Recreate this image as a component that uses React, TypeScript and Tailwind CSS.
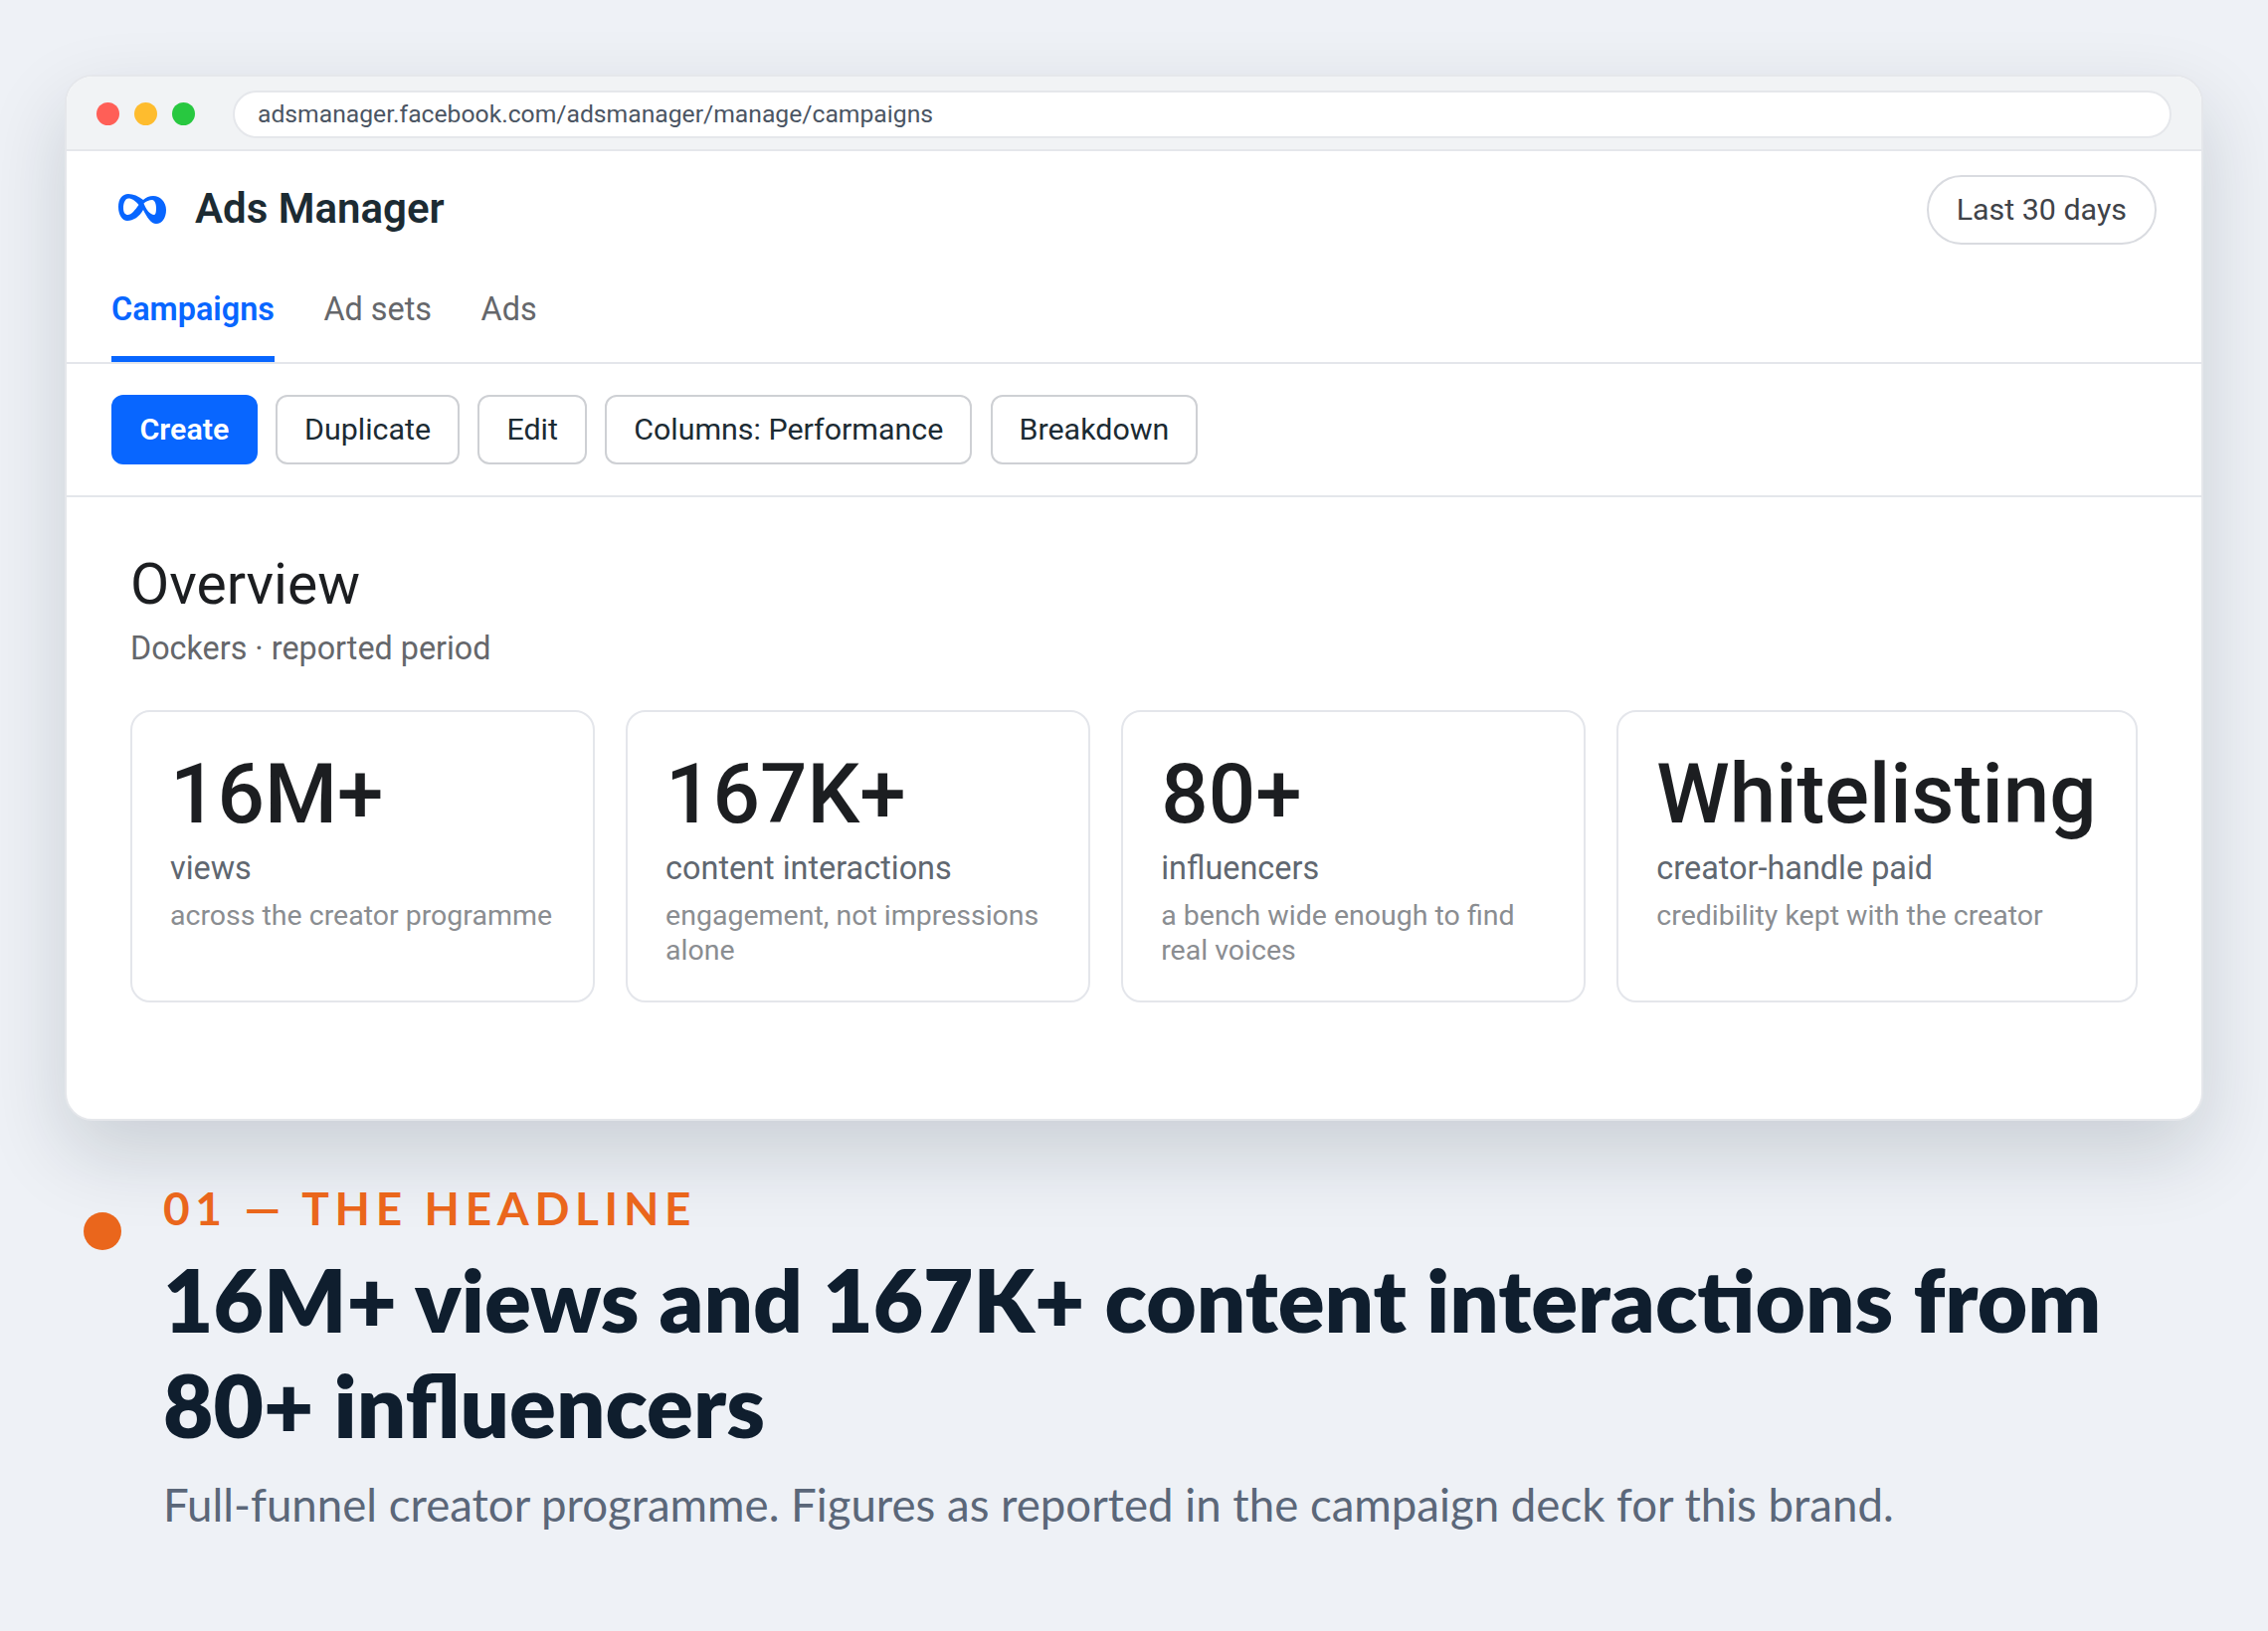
const stats = [
  { value: '16M+', label: 'views', note: 'across the creator programme' },
  { value: '167K+', label: 'content interactions', note: 'engagement, not impressions alone' },
  { value: '80+', label: 'influencers', note: 'a bench wide enough to find real voices' },
  { value: 'Whitelisting', label: 'creator-handle paid', note: 'credibility kept with the creator' },
];

const actions = ['Duplicate', 'Edit', 'Columns: Performance', 'Breakdown'];

function MetaLogo() {
  return (
    <svg width="48" height="30" viewBox="0 0 48 30">
      <path
        fill="#0866ff"
        fillRule="evenodd"
        d="M0 13C0 5 4 0 10 0C15 0 20 2 25 6C28 3.500 31 2 35 2C42 2 48 8 48 16C48 24 44 30 38 30C33 30 29 24 25 16C21 23 15 27 9 27C4 27 0 21 0 13ZM5 14C5 9 7 4.500 10 4.500C14 4.500 17 7 20.500 11C17 16 13 21 9.500 21C7 21 5 19 5 14ZM25.500 9.500C28 7.500 31 6 34 6C36.500 6 38 10 38 14C38 18 37.500 21 36 21C32 21 28 16 25.500 9.500Z"
      />
    </svg>
  );
}

export default function App() {
  return (
    <div className="h-[1640px] w-[2280px] overflow-hidden bg-[#eef1f6] px-[65px] pt-[75px] font-['Roboto',sans-serif]">
      {/* browser window */}
      <div className="h-[1052px] overflow-hidden rounded-[28px] border-2 border-[#e5e7eb] bg-white shadow-[0_32px_80px_rgba(15,30,46,0.16)]">
        <div className="flex h-[75px] items-center gap-[38px] border-b-2 border-[#e5e7eb] bg-[#f1f3f5] pt-[2px] pr-[30px] pl-[30px]">
          <div className="flex gap-[15px]">
            <span className="h-[23px] w-[23px] rounded-full bg-[#ff5f57]" />
            <span className="h-[23px] w-[23px] rounded-full bg-[#febc2e]" />
            <span className="h-[23px] w-[23px] rounded-full bg-[#28c840]" />
          </div>
          <div className="flex h-[48px] flex-1 items-center rounded-full border-2 border-[#e5e7eb] bg-white px-[23px] text-[24.7px] text-[#4b5563]">
            adsmanager.facebook.com/adsmanager/manage/campaigns
          </div>
        </div>

        <div className="flex items-start justify-between px-[45px] pt-[24px]">
          <div className="flex items-center gap-[29px] pt-[10px] pl-[7px]">
            <MetaLogo />
            <span className="text-[42px] font-semibold leading-[48px] text-[#1c2b33]">Ads Manager</span>
          </div>
          <div className="flex h-[70px] items-center rounded-full border-2 border-[#d9dbe0] px-[28px] text-[30.4px] text-[#3f4349]">
            Last 30 days
          </div>
        </div>

        <div className="flex gap-[49.5px] border-b-2 border-[#e4e6eb] px-[45px] pt-[41px] text-[32.4px]">
          <div className="border-b-[6px] border-[#0866ff] pb-[22px] font-semibold text-[#0866ff]">Campaigns</div>
          <div className="pb-[22px] text-[#65676b]">Ad sets</div>
          <div className="pb-[22px] text-[#65676b]">Ads</div>
        </div>

        <div className="flex gap-[18.3px] border-b-2 border-[#e4e6eb] px-[45px] pt-[31px] pb-[31px] text-[30.4px]">
          <button className="flex h-[70px] items-center rounded-[12px] bg-[#0866ff] px-[28.5px] font-semibold text-white">
            Create
          </button>
          {actions.map((a) => (
            <button
              key={a}
              className="flex h-[70px] items-center rounded-[12px] border-2 border-[#ced0d4] px-[27px] text-[#1c2b33]"
            >
              {a}
            </button>
          ))}
        </div>

        <div className="px-[64px] pt-[55px]">
          <h1 className="text-[57px] leading-[66px] text-[#1c1e21]">Overview</h1>
          <p className="mt-[11px] text-[32.3px] leading-[40px] text-[#65676b]">Dockers · reported period</p>
          <div className="mt-[42px] grid grid-cols-[repeat(4,1fr)] gap-[31px]">
            {stats.map((s) => (
              <div key={s.value} className="h-[294px] rounded-[20px] border-2 border-[#e4e6eb] pt-[33px] pr-[39.5px] pl-[38px]">
                <div className="text-[83.5px] font-medium leading-[100px] text-[#1c1e21]">{s.value}</div>
                <div className="mt-[4px] text-[32.4px] leading-[40px] text-[#606770]">{s.label}</div>
                <div className="mt-[10px] text-[28.5px] leading-[35px] text-[#8a8d91]">{s.note}</div>
              </div>
            ))}
          </div>
        </div>
      </div>

      {/* caption */}
      <div className="mt-[60px] flex gap-[42px] pl-[19px] font-['Lato',sans-serif]">
        <span className="mt-[32px] h-[38px] w-[38px] shrink-0 rounded-full bg-[#ea661c]" />
        <div>
          <div className="text-[46px] font-bold uppercase leading-[56px] tracking-[0.123em] text-[#ea661c]">
            01 — The headline
          </div>
          <h2 className="mt-[11px] text-[87px] font-extrabold leading-[105.6px] text-[#0f1e2e]">
            16M+ views and 167K+ content interactions from 80+ influencers
          </h2>
          <p className="mt-[18px] text-[45.6px] leading-[60px] text-[#5b6779]">
            Full-funnel creator programme. Figures as reported in the campaign deck for this brand.
          </p>
        </div>
      </div>
    </div>
  );
}
